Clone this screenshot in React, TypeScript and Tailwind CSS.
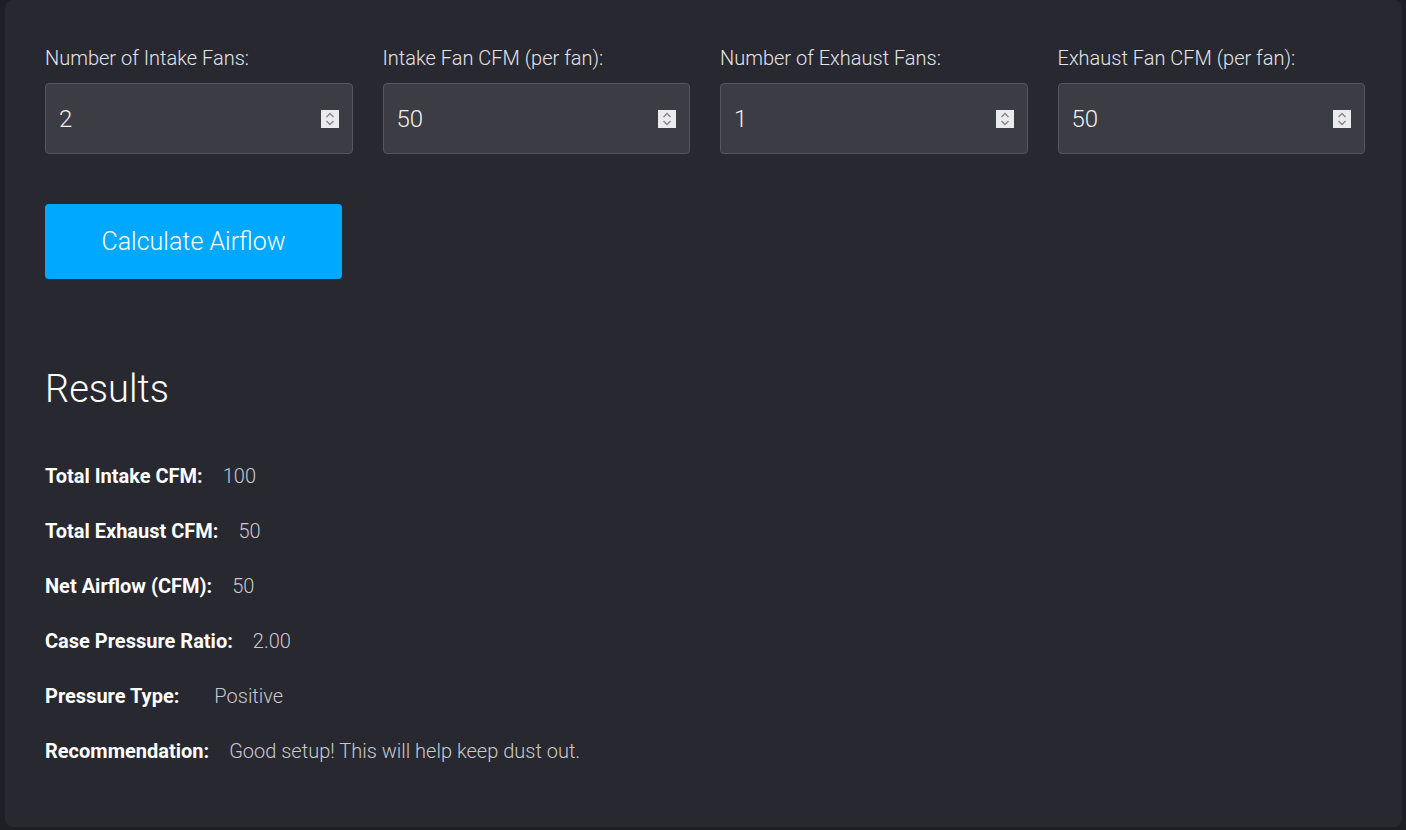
import React from "react";

const fields = [
  { label: "Number of Intake Fans:", value: "2" },
  { label: "Intake Fan CFM (per fan):", value: "50" },
  { label: "Number of Exhaust Fans:", value: "1" },
  { label: "Exhaust Fan CFM (per fan):", value: "50" },
];

const results = [
  { label: "Total Intake CFM:", value: "100", extra: "" },
  { label: "Total Exhaust CFM:", value: "50", extra: "" },
  { label: "Net Airflow (CFM):", value: "50", extra: "" },
  { label: "Case Pressure Ratio:", value: "2.00", extra: "" },
  { label: "Pressure Type:", value: "Positive", extra: "pl-[15px]" },
  { label: "Recommendation:", value: "Good setup! This will help keep dust out.", extra: "" },
];

function Spinner() {
  return (
    <span className="flex h-[18px] w-[18px] items-center justify-center bg-[#ebebef]">
      <svg width="12" height="16" viewBox="0 0 12 16" fill="none" stroke="#85858c" strokeWidth="1.4">
        <path d="M2.5 6 L6 2.5 L9.5 6" />
        <path d="M2.5 10 L6 13.5 L9.5 10" />
      </svg>
    </span>
  );
}

export default function App() {
  return (
    <div
      className="flex h-screen flex-col bg-[#1e1f25] pl-[5px] pr-[4px] pb-[3px] text-white"
      style={{ fontFamily: "Roboto, 'Liberation Sans', sans-serif" }}
    >
      <div className="flex-1 rounded-lg bg-[#282830] pl-10 pr-[37px] pt-[45px]">
        {/* Inputs */}
        <div className="grid grid-cols-4 gap-[30px]">
          {fields.map((f) => (
            <div key={f.label}>
              <div className="mb-[11px] text-[20px] font-light leading-[27px] text-[#e4e4e8]">
                {f.label}
              </div>
              <div className="flex h-[71px] items-center justify-between rounded border border-[#56565e] bg-[#3c3c44] pl-[13px] pr-[13px]">
                <span className="text-[24px] font-light text-[#f0f0f2]">{f.value}</span>
                <Spinner />
              </div>
            </div>
          ))}
        </div>

        <button className="mt-[50px] h-[75px] w-[297px] rounded bg-[#00a8ff] text-[25px] font-light text-white">
          Calculate Airflow
        </button>

        {/* Results */}
        <h2 className="mt-[85px] text-[38px] font-light leading-[50px] text-white">Results</h2>

        <div className="mt-[49px] flex flex-col gap-[28px]">
          {results.map((r) => (
            <div key={r.label} className="flex text-[20px] leading-[27px]">
              <span className="font-bold text-white">{r.label}</span>
              <span className={`ml-[20px] font-light text-[#c9c9cd] ${r.extra}`}>{r.value}</span>
            </div>
          ))}
        </div>
      </div>
    </div>
  );
}
